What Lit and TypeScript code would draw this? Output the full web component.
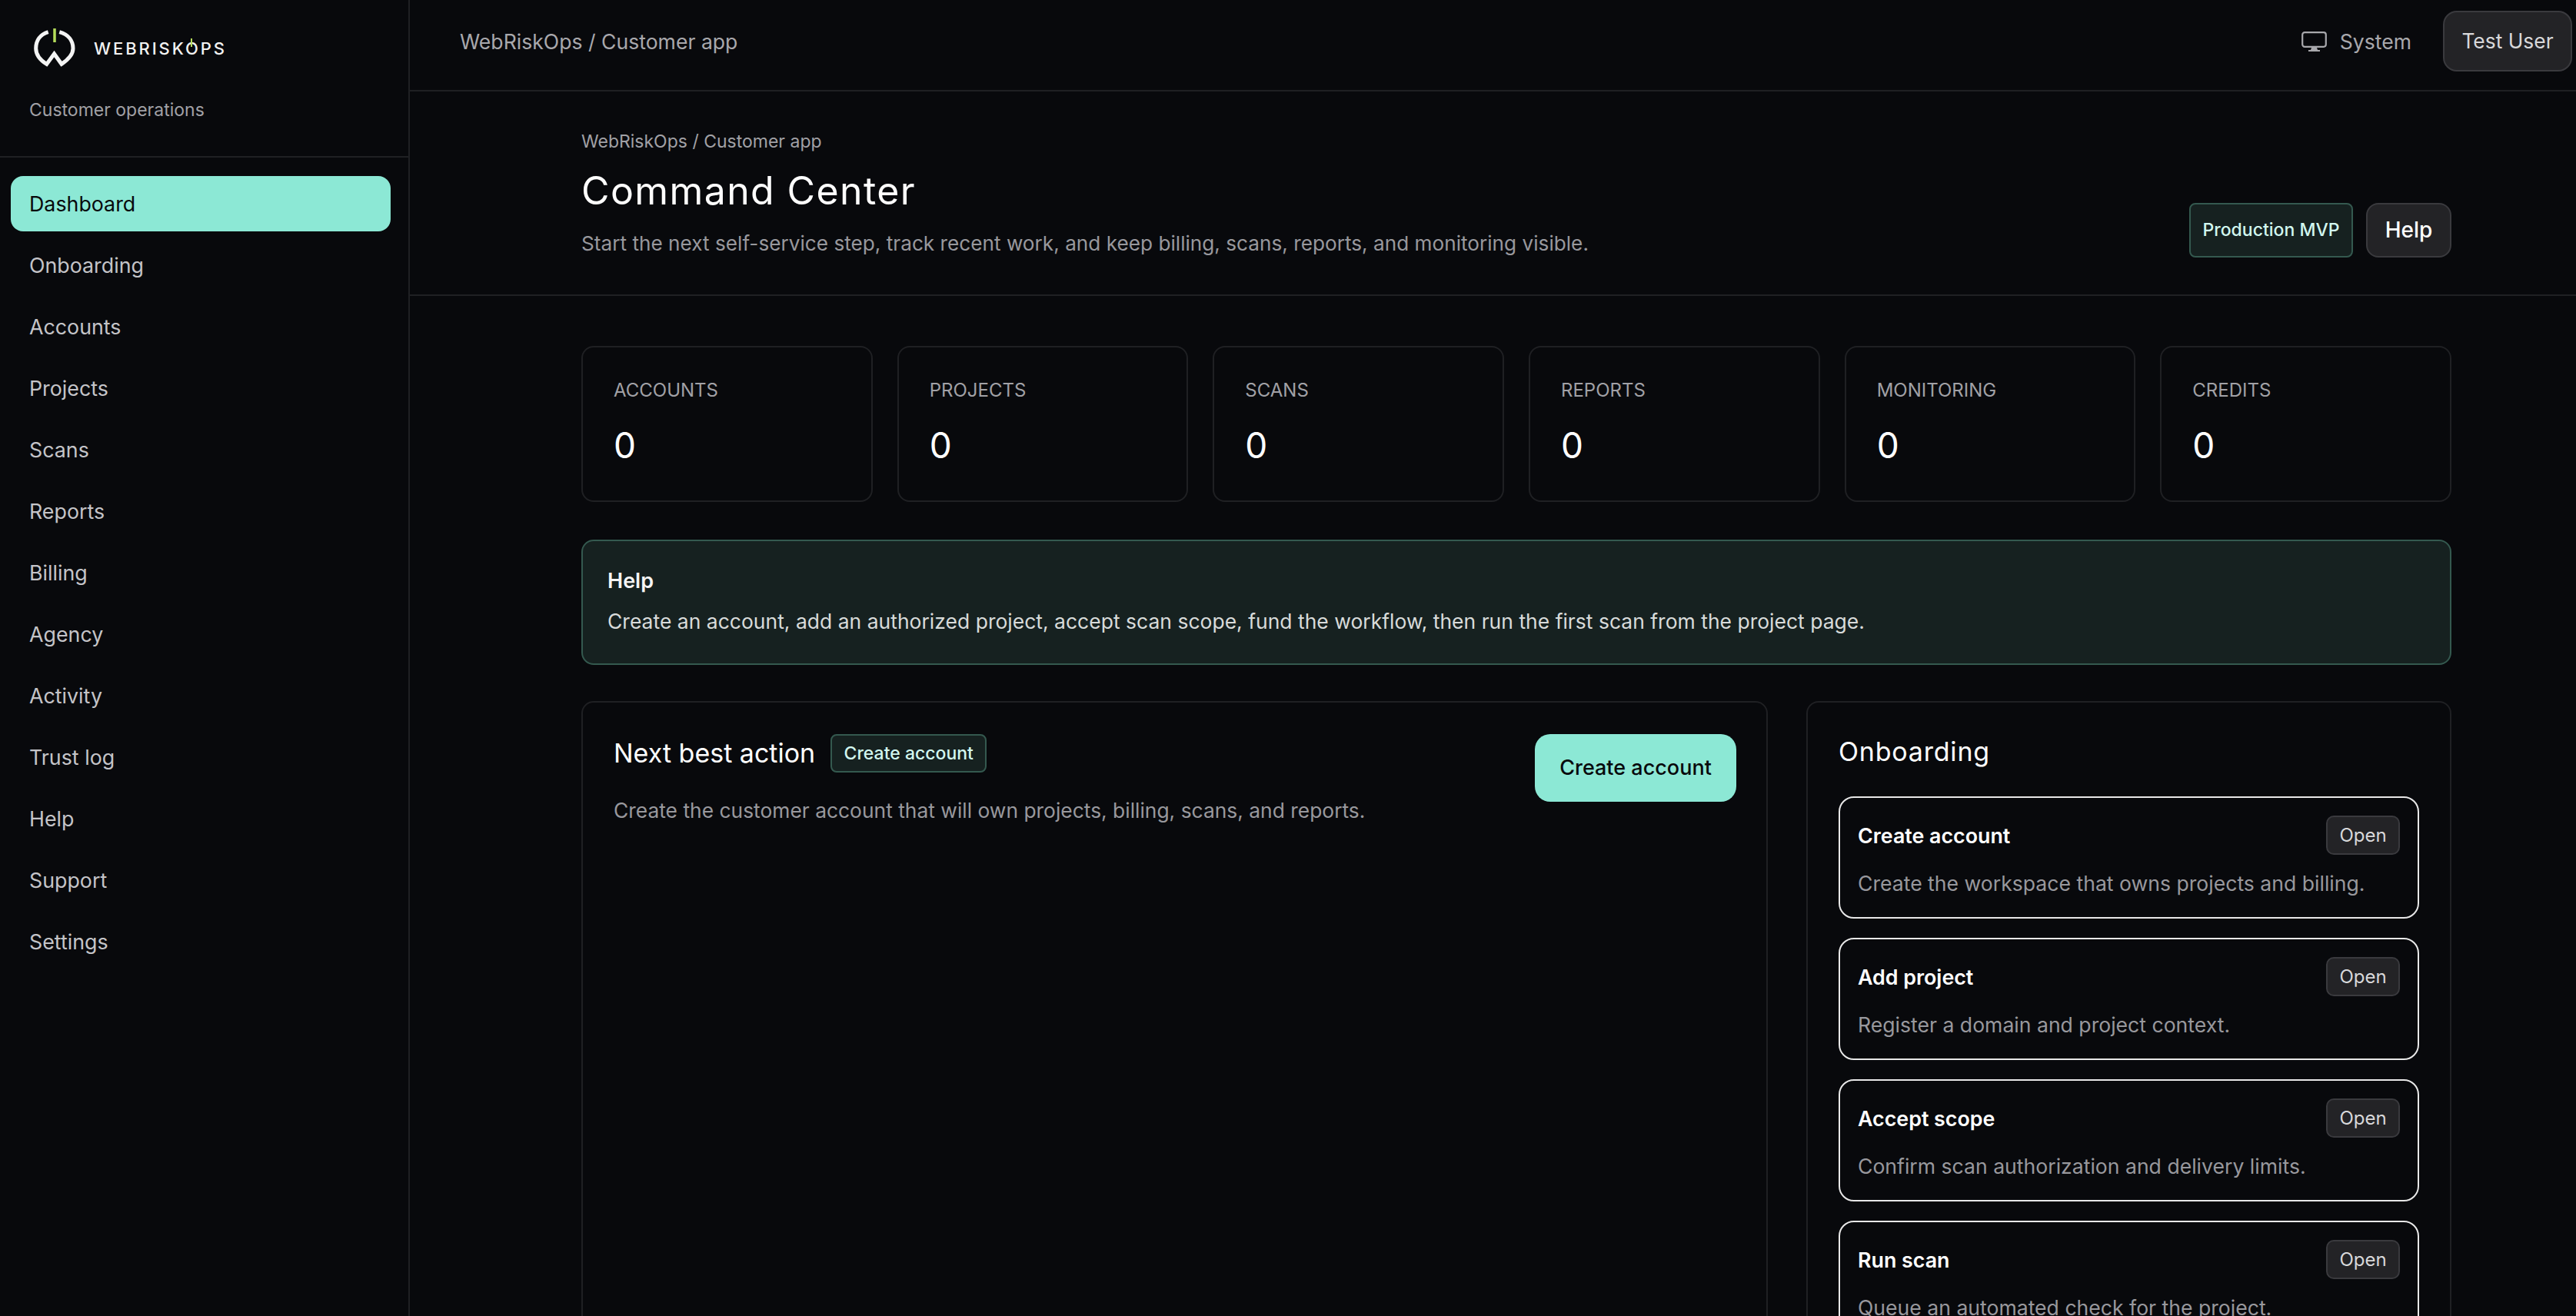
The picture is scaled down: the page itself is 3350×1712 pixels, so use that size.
import { LitElement, css, html } from 'lit';
import { customElement } from 'lit/decorators.js';

const NAV = ['Dashboard', 'Onboarding', 'Accounts', 'Projects', 'Scans', 'Reports', 'Billing', 'Agency', 'Activity', 'Trust log', 'Help', 'Support', 'Settings'];
const STATS = ['Accounts', 'Projects', 'Scans', 'Reports', 'Monitoring', 'Credits'];
const STEPS = [
  ['Create account', 'Create the workspace that owns projects and billing.'],
  ['Add project', 'Register a domain and project context.'],
  ['Accept scope', 'Confirm scan authorization and delivery limits.'],
  ['Run scan', 'Queue an automated check for the project.'],
];

@customElement('app-root')
export class AppRoot extends LitElement {
  static styles = css`
    :host {
      background: #08090c;
      color: #f5f5f5;
      display: block;
      font-family: 'Inter', 'Liberation Sans', sans-serif;
      height: 100vh;
      overflow: hidden;
    }

    .app {
      display: flex;
      height: 100%;
    }

    .sidebar {
      border-right: 2px solid #1f2023;
      flex: 0 0 533px;
      box-sizing: border-box;
    }

    .brand {
      border-bottom: 2px solid #1f2023;
      box-sizing: border-box;
      height: 205px;
      padding: 35px 0 0 38px;
    }

    .logo {
      align-items: center;
      display: flex;
      gap: 24px;
      margin-left: 6px;
    }

    .logo svg {
      display: block;
    }

    .wordmark {
      color: #f2f2f2;
      font-size: 22px;
      font-weight: 500;
      letter-spacing: 2.9px;
      line-height: 28px;
      padding-top: 4px;
    }

    .wordmark .o {
      position: relative;
    }

    .wordmark .o::after {
      background: #b4dc5a;
      content: '';
      height: 11px;
      left: 50%;
      margin-left: -3px;
      position: absolute;
      top: 0;
      width: 2px;
    }

    .tagline {
      color: #a1a1a6;
      font-size: 23px;
      line-height: 32px;
      margin-top: 40px;
    }

    nav {
      display: flex;
      flex-direction: column;
      gap: 8px;
      padding: 24px 23px 0 14px;
    }

    nav a {
      border-radius: 16px;
      color: #c4c4c8;
      font-size: 26.8px;
      line-height: 72px;
      padding-left: 24px;
    }

    nav a.active {
      background: #8ce8d5;
      color: #08090c;
    }

    main {
      flex: 1;
      min-width: 0;
    }

    .topbar {
      align-items: flex-start;
      border-bottom: 2px solid #1f2023;
      box-sizing: border-box;
      display: flex;
      height: 119px;
      justify-content: space-between;
      padding: 14px 5px 0 65px;
    }

    .crumb {
      color: #a8a8ac;
      font-size: 26.6px;
      line-height: 80px;
    }

    .top-actions {
      align-items: center;
      display: flex;
      gap: 41px;
    }

    .system {
      align-items: center;
      color: #a8a8ac;
      display: flex;
      font-size: 26.6px;
      gap: 17px;
    }

    .user {
      background: #232326;
      border: 2px solid #3a3a3e;
      border-radius: 18px;
      box-sizing: border-box;
      color: #d8d8da;
      font-size: 26.4px;
      height: 79px;
      line-height: 75px;
      text-align: center;
      width: 168px;
    }

    .head {
      border-bottom: 2px solid #1f2023;
      box-sizing: border-box;
      display: flex;
      height: 266px;
      justify-content: space-between;
      padding: 49px 162px 0 223px;
    }

    .head .small {
      color: #a1a1a6;
      font-size: 23px;
      line-height: 32px;
    }

    h1 {
      color: #fff;
      font-size: 50px;
      font-weight: 400;
      letter-spacing: 1.4px;
      line-height: 60px;
      margin: 18px 0 19px;
    }

    .sub {
      color: #98989d;
      font-size: 26.2px;
      line-height: 40px;
    }

    .head-actions {
      align-items: flex-end;
      display: flex;
      gap: 17px;
      padding-bottom: 48px;
    }

    .badge {
      background: #162120;
      border: 2px solid #34594f;
      border-radius: 8px;
      box-sizing: border-box;
      color: #d2f7ef;
      font-size: 23px;
      font-weight: 500;
      text-align: center;
    }

    .head-actions .badge {
      height: 71px;
      line-height: 67px;
      width: 213px;
    }

    .help-btn {
      background: #232326;
      border: 2px solid #3a3a3e;
      border-radius: 16px;
      box-sizing: border-box;
      color: #fff;
      font-size: 28px;
      font-weight: 500;
      height: 71px;
      line-height: 67px;
      text-align: center;
      width: 111px;
    }

    .content {
      display: flex;
      flex-direction: column;
      padding: 65px 162px 0 223px;
    }

    .stats {
      display: grid;
      gap: 32px;
      grid-template-columns: repeat(6, 1fr);
    }

    .stat {
      border: 2px solid #1f2023;
      border-radius: 16px;
      box-sizing: border-box;
      height: 203px;
      padding: 40px 40px 0;
    }

    .stat .label {
      color: #a1a1a6;
      font-size: 24px;
      line-height: 32px;
      text-transform: uppercase;
    }

    .stat .value {
      color: #fff;
      font-size: 46px;
      line-height: 60px;
      margin-top: 25px;
    }

    .banner {
      background: #162120;
      border: 2px solid #34594f;
      border-radius: 16px;
      box-sizing: border-box;
      height: 163px;
      margin: 49px 0 47px;
      padding: 34px 32px 0;
    }

    .banner .title {
      color: #f5f5f5;
      font-size: 27px;
      font-weight: 600;
      line-height: 36px;
    }

    .banner .text {
      color: #d8dbda;
      font-size: 26.5px;
      line-height: 40px;
      margin-top: 14px;
    }

    .columns {
      display: grid;
      gap: 50px;
      grid-template-columns: 1543px 839px;
    }

    .panel {
      border: 2px solid #1f2023;
      border-radius: 16px;
      box-sizing: border-box;
      height: 900px;
    }

    .next {
      align-items: flex-start;
      display: flex;
      justify-content: space-between;
      padding: 41px 39px 0 40px;
    }

    .next .row {
      align-items: center;
      display: flex;
      gap: 20px;
    }

    .panel-title {
      color: #fff;
      font-size: 34px;
      font-weight: 400;
      line-height: 44px;
    }

    .row .badge {
      height: 50px;
      line-height: 46px;
      width: 203px;
    }

    .next .sub {
      font-size: 26.4px;
      margin-top: 29px;
    }

    .primary {
      background: #8ce8d5;
      border-radius: 20px;
      color: #08090c;
      font-size: 27px;
      font-weight: 500;
      height: 88px;
      line-height: 88px;
      text-align: center;
      width: 262px;
    }

    .onboarding {
      padding: 42px 40px 0 40px;
    }

    .onboarding .panel-title {
      letter-spacing: 0.8px;
    }

    .steps {
      display: flex;
      flex-direction: column;
      gap: 25px;
      margin-top: 36px;
    }

    .step {
      border: 2px solid #e8e8e8;
      border-radius: 20px;
      box-sizing: border-box;
      height: 159px;
      padding: 23px 23px 0;
    }

    .step-head {
      align-items: center;
      display: flex;
      justify-content: space-between;
    }

    .step-title {
      color: #fff;
      font-size: 26.8px;
      font-weight: 600;
    }

    .open {
      background: #232326;
      border: 2px solid #3a3a3e;
      border-radius: 10px;
      box-sizing: border-box;
      color: #d8d8da;
      font-size: 24px;
      height: 51px;
      line-height: 47px;
      text-align: center;
      width: 96px;
    }

    .step .desc {
      color: #98989d;
      font-size: 26.6px;
      line-height: 38px;
      margin-top: 18px;
    }
  `;

  render() {
    return html`
      <div class="app">
        <aside class="sidebar">
          <div class="brand">
            <div class="logo">
              <svg width="54" height="52" viewBox="0 0 54 52" fill="none">
                <path d="M18.7 6.7C8 10 2.7 18 2.7 28C2.7 36 8 43 16.7 48.5L26.5 35L36 48.3C44 43 51 36 51 28C51 18 45 10 33.3 6.7" stroke="#f4f4f4" stroke-width="5" />
                <path d="M27 2V20" stroke="#b4dc5a" stroke-width="3.5" />
              </svg>
              <span class="wordmark">WEBRISK<span class="o">O</span>PS</span>
            </div>
            <div class="tagline">Customer operations</div>
          </div>
          <nav>
            ${NAV.map((n, i) => html`<a class=${i === 0 ? 'active' : ''}>${n}</a>`)}
          </nav>
        </aside>
        <main>
          <div class="topbar">
            <div class="crumb">WebRiskOps / Customer app</div>
            <div class="top-actions">
              <div class="system">
                <svg width="33" height="26" viewBox="0 0 33 26" fill="none">
                  <rect x="1.2" y="1.2" width="30.6" height="18.6" rx="3" stroke="#a8a8ac" stroke-width="2.2" />
                  <path d="M13 21H20L21 24H24V26H9V24H12Z" fill="#a8a8ac" />
                </svg>
                System
              </div>
              <div class="user">Test User</div>
            </div>
          </div>
          <div class="head">
            <div>
              <div class="small">WebRiskOps / Customer app</div>
              <h1>Command Center</h1>
              <div class="sub">Start the next self-service step, track recent work, and keep billing, scans, reports, and monitoring visible.</div>
            </div>
            <div class="head-actions">
              <div class="badge">Production MVP</div>
              <div class="help-btn">Help</div>
            </div>
          </div>
          <div class="content">
            <div class="stats">
              ${STATS.map(s => html`<div class="stat"><div class="label">${s}</div><div class="value">0</div></div>`)}
            </div>
            <div class="banner">
              <div class="title">Help</div>
              <div class="text">Create an account, add an authorized project, accept scan scope, fund the workflow, then run the first scan from the project page.</div>
            </div>
            <div class="columns">
              <section class="panel next">
                <div>
                  <div class="row">
                    <div class="panel-title">Next best action</div>
                    <div class="badge">Create account</div>
                  </div>
                  <div class="sub">Create the customer account that will own projects, billing, scans, and reports.</div>
                </div>
                <div class="primary">Create account</div>
              </section>
              <section class="panel onboarding">
                <div class="panel-title">Onboarding</div>
                <div class="steps">
                  ${STEPS.map(([t, d]) => html`
                    <div class="step">
                      <div class="step-head">
                        <div class="step-title">${t}</div>
                        <div class="open">Open</div>
                      </div>
                      <div class="desc">${d}</div>
                    </div>
                  `)}
                </div>
              </section>
            </div>
          </div>
        </main>
      </div>
    `;
  }
}
